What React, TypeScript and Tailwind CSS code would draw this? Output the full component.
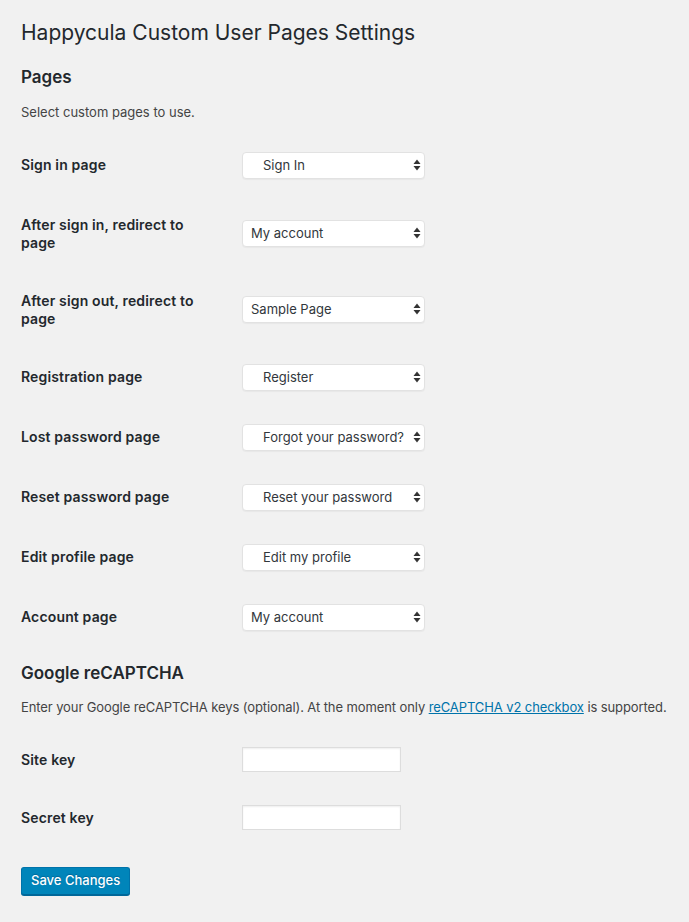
import React from "react";

const Arrows = () => (
  <svg
    className="pointer-events-none absolute right-[4px] top-1/2 -translate-y-1/2"
    width="8"
    height="12"
    viewBox="0 0 8 12"
  >
    <path d="M4 0.5 L7.5 5 L0.5 5 Z" fill="#333" />
    <path d="M4 11.5 L7.5 7 L0.5 7 Z" fill="#333" />
  </svg>
);

const Select = ({ value, indent }: { value: string; indent?: boolean }) => (
  <div className="relative ml-px h-[27px] w-[183px]">
    <select
      defaultValue={value}
      className={
        "h-full w-full appearance-none rounded-[4px] border border-[#e2e2e2] bg-white pr-4 text-[13px] text-[#32373c] shadow-[0_1px_1px_rgba(0,0,0,0.04)] outline-none " +
        (indent ? "pl-[20px]" : "pl-[8px]")
      }
    >
      <option value={value}>{value}</option>
    </select>
    <Arrows />
  </div>
);

type Row = { label: string; value: string; indent?: boolean };

const rows: Row[] = [
  { label: "Sign in page", value: "Sign In", indent: true },
  { label: "After sign in, redirect to page", value: "My account" },
  { label: "After sign out, redirect to page", value: "Sample Page" },
  { label: "Registration page", value: "Register", indent: true },
  { label: "Lost password page", value: "Forgot your password?", indent: true },
  { label: "Reset password page", value: "Reset your password", indent: true },
  { label: "Edit profile page", value: "Edit my profile", indent: true },
  { label: "Account page", value: "My account" },
];

const FormRow = ({ label, children }: { label: string; children: React.ReactNode }) => (
  <div className="flex items-stretch">
    <div className="w-[190px] mr-[30px] pt-[20.5px] pb-[19.5px] text-[14px] font-semibold leading-[18px] tracking-[0.15px] text-[#23282d]">
      {label}
    </div>
    <div className="flex items-center py-[16.5px]">{children}</div>
  </div>
);

export default function App() {
  return (
    <div className="min-h-screen bg-[#f1f1f1] pl-[21px] pb-6 font-['Inter','Liberation_Sans',sans-serif] text-[#444]">
      <h1 className="pt-[18px] text-[21px] font-normal leading-[30px] text-[#23282d]">
        Happycula Custom User Pages Settings
      </h1>
      <h2 className="mt-[18px] text-[17px] font-semibold leading-[22px] text-[#23282d]">Pages</h2>
      <p className="mt-[15px] text-[13px] leading-[18px]">Select custom pages to use.</p>
      <div className="mt-[14px] flex flex-col">
        {rows.map((r) => (
          <FormRow key={r.label} label={r.label}>
            <Select value={r.value} indent={r.indent} />
          </FormRow>
        ))}
      </div>
      <h2 className="mt-[15px] text-[17px] font-semibold leading-[22px] text-[#23282d]">Google reCAPTCHA</h2>
      <p className="mt-[14px] whitespace-nowrap text-[13px] leading-[18px] tracking-[-0.1px]">
        Enter your Google reCAPTCHA keys (optional). At the moment only{" "}
        <a href="#" className="text-[#0073aa] underline">
          reCAPTCHA v2 checkbox
        </a>{" "}
        is supported.
      </p>
      <div className="mt-[14px] flex flex-col">
        <FormRow label="Site key">
          <input
            type="text"
            className="ml-px h-[25px] w-[159px] border border-[#ddd] bg-white shadow-[inset_0_1px_2px_rgba(0,0,0,0.07)] outline-none"
          />
        </FormRow>
        <FormRow label="Secret key">
          <input
            type="text"
            className="ml-px h-[25px] w-[159px] border border-[#ddd] bg-white shadow-[inset_0_1px_2px_rgba(0,0,0,0.07)] outline-none"
          />
        </FormRow>
      </div>
      <button
        type="button"
        className="mt-[21px] h-[28px] rounded-[3px] border border-[#0073aa] border-b-[#006799] bg-[#0085ba] px-[9px] text-[13px] font-medium text-white shadow-[0_1px_0_#006799] [text-shadow:0_-1px_1px_#006799]"
      >
        Save Changes
      </button>
    </div>
  );
}
